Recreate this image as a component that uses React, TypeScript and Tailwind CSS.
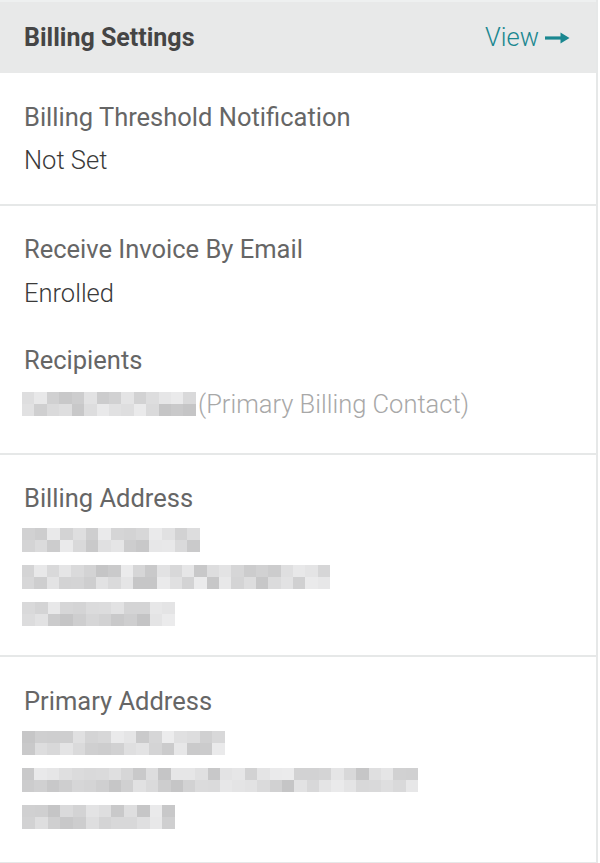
import React from "react";

function grays(seed: number, n: number): string[] {
  const out: string[] = [];
  let s = seed;
  for (let i = 0; i < n; i++) {
    s = (s * 9301 + 49297) % 233280;
    const r = s / 233280;
    const v = Math.round(196 + r * 40);
    out.push(`rgb(${v},${v},${v + 1})`);
  }
  return out;
}

function PixelLine({ width, seed }: { width: number; seed: number }) {
  const cols = Math.round(width / 12.5);
  const top = grays(seed, cols);
  const bot = grays(seed + 77, cols);
  return (
    <div className="flex flex-col" style={{ width }}>
      <div className="flex h-[12px]">
        {top.map((c, i) => (
          <div key={i} className="flex-1" style={{ backgroundColor: c }} />
        ))}
      </div>
      <div className="flex h-[12px]">
        {bot.map((c, i) => (
          <div key={i} className="flex-1" style={{ backgroundColor: c }} />
        ))}
      </div>
    </div>
  );
}

const label = "text-[25.5px] leading-[32px] text-[#666666]";
const value = "text-[25.5px] leading-[32px] text-[#3a3a3a] font-light";

export default function App() {
  return (
    <div
      className="w-[598px] bg-white border-r-2 border-b-2 border-[#e6e8e8]"
      style={{ fontFamily: "Roboto, 'Noto Sans', sans-serif" }}
    >
      <div className="h-[73px] bg-[#e8e9e9] flex items-center justify-between pl-[24px] pr-[26px] border-t-2 border-[#eef0f0]">
        <div className="text-[25px] font-bold text-[#454545]">Billing Settings</div>
        <div className="flex items-center gap-[6px] text-[25.5px] font-light text-[#1a8790]">
          <span>View</span>
          <svg width="25" height="14" viewBox="0 0 25 14">
            <path d="M0 7h19" stroke="#1a8790" strokeWidth="3.2" />
            <path d="M15.5 1.5L24.5 7L15.5 12.5Z" fill="#1a8790" />
          </svg>
        </div>
      </div>

      <div className="pl-[24px] pt-[28px] pb-[28px] border-b-2 border-[#e6e8e8]">
        <div className={label}>Billing Threshold Notification</div>
        <div className={`${value} mt-[11px]`}>Not Set</div>
      </div>

      <div className="pl-[24px] pt-[27px] pb-[33px] border-b-2 border-[#e6e8e8]">
        <div className={label}>Receive Invoice By Email</div>
        <div className={`${value} mt-[12px]`}>Enrolled</div>
        <div className={`${label} mt-[35px]`}>Recipients</div>
        <div className="flex items-center mt-[12px] h-[32px] -ml-[2px]">
          <PixelLine width={174} seed={11} />
          <span className="text-[25.5px] leading-[32px] font-light text-[#a8a8a8] ml-[2px]">
            (Primary Billing Contact)
          </span>
        </div>
      </div>

      <div className="pl-[22px] pt-[27px] pb-[29px] border-b-2 border-[#e6e8e8]">
        <div className={`${label} pl-[2px]`}>Billing Address</div>
        <div className="flex flex-col gap-[13px] mt-[14px]">
          <PixelLine width={178} seed={3} />
          <PixelLine width={308} seed={5} />
          <PixelLine width={153} seed={8} />
        </div>
      </div>

      <div className="pl-[22px] pt-[28px] pb-[33px]">
        <div className={`${label} pl-[2px]`}>Primary Address</div>
        <div className="flex flex-col gap-[13px] mt-[14px]">
          <PixelLine width={203} seed={21} />
          <PixelLine width={396} seed={23} />
          <PixelLine width={153} seed={27} />
        </div>
      </div>
    </div>
  );
}
